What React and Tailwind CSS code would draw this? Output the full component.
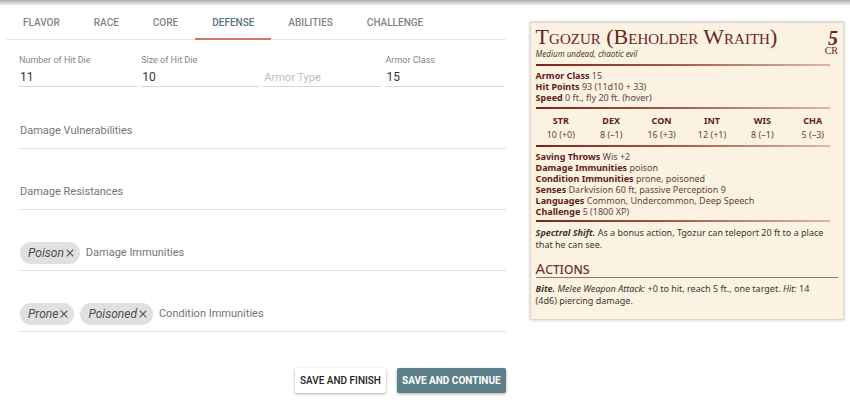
import React from "react";

const tabs = ["FLAVOR", "RACE", "CORE", "DEFENSE", "ABILITIES", "CHALLENGE"];

const abilities = [
  ["STR", "10 (+0)"],
  ["DEX", "8 (–1)"],
  ["CON", "16 (+3)"],
  ["INT", "12 (+1)"],
  ["WIS", "8 (–1)"],
  ["CHA", "5 (–3)"],
];

function Tabs() {
  return (
    <nav className="flex h-[34px] border-b border-[#e8e8e8]">
      {tabs.map((tab) => (
        <button
          key={tab}
          type="button"
          className={
            tab === "DEFENSE"
              ? "-mb-px border-b-2 border-[#cf7a60] px-[17px] text-[10px] font-medium text-[#5c7582]"
              : "-mb-px border-b-2 border-transparent px-[17px] text-[10px] font-medium text-[#858585]"
          }
        >
          {tab}
        </button>
      ))}
    </nav>
  );
}

function Field({ id, label, value }) {
  return (
    <div className="flex h-8 min-w-0 flex-1 flex-col justify-end border-b border-[#d6d6d6]">
      {value && (
        <label htmlFor={id} className="text-[9px] leading-[11px] text-[#858585]">
          {label}
        </label>
      )}
      <input
        id={id}
        type="text"
        aria-label={value ? undefined : label}
        defaultValue={value}
        placeholder={value ? undefined : label}
        className={
          value
            ? "h-5 w-full bg-transparent px-px pt-[2px] text-[12px] text-[#333] outline-none"
            : "h-5 w-full bg-transparent px-px pt-[2px] text-[11px] outline-none placeholder:text-[#bdbdbd]"
        }
      />
    </div>
  );
}

function ChipField({ id, label, chips = [] }) {
  return (
    <div className="flex h-[35px] items-center border-b border-[#e2e2e2] pb-px pl-px">
      {chips.map((chip) => (
        <span
          key={chip}
          className="mr-[6px] flex h-[22px] shrink-0 items-center gap-[2px] rounded-full bg-[#e0e0e0] pr-[6px] pl-2 text-[12px] text-[#4f4f4f] italic"
        >
          {chip}
          <button type="button" aria-label={"Remove " + chip}>
            <svg className="size-2" viewBox="0 0 8 8" fill="none" stroke="#555" strokeWidth="1.2">
              <path d="M0.7 0.7 7.3 7.3M7.3 0.7 0.7 7.3" />
            </svg>
          </button>
        </span>
      ))}
      <input
        id={id}
        type="text"
        aria-label={label}
        placeholder={label}
        className="min-w-0 flex-1 bg-transparent pt-[2px] text-[11px] text-[#555] outline-none placeholder:text-[#757575]"
      />
    </div>
  );
}

function Rule() {
  return <hr className="mr-2 h-[2px] border-0 bg-linear-to-r from-[#7a2418] via-[#a5604f] to-[#dcb9a6]" />;
}

function Stat({ name, children }) {
  return (
    <p>
      <strong className="font-bold text-[#5e2019]">{name}</strong> {children}
    </p>
  );
}

function StatBlock() {
  return (
    <article className="mt-4 h-fit min-w-0 border border-[#e3d6c8] bg-[#fcf2e2] px-[5px] pt-[3px] pb-3 font-['Noto_Sans',sans-serif] text-[9px] leading-[11px] text-[#65423a] shadow-[0_0_3px_rgba(0,0,0,0.25)]">
      <header className="flex justify-between text-[#6b241c]">
        <div>
          <h1 className="font-['Liberation_Serif',serif] text-[22px] leading-[22px] [font-variant-caps:small-caps]">
            Tgozur (Beholder Wraith)
          </h1>
          <p className="text-[8px] leading-[11px] text-[#4d3a32] italic">Medium undead, chaotic evil</p>
        </div>
        <div className="pt-1 text-right font-['Liberation_Serif',serif]">
          <div className="text-[20px] leading-[16px] font-bold italic">5</div>
          <div className="text-[10px] leading-[10px]">CR</div>
        </div>
      </header>

      <div className="pt-[5px]">
        <Rule />
      </div>
      <div className="py-1">
        <Stat name="Armor Class">15</Stat>
        <Stat name="Hit Points">93 (11d10 + 33)</Stat>
        <Stat name="Speed">0 ft., fly 20 ft. (hover)</Stat>
      </div>
      <Rule />
      <table className="my-1 w-full table-fixed text-center">
        <thead>
          <tr>
            {abilities.map(([name]) => (
              <th key={name} scope="col" className="h-[14px] p-0 font-bold text-[#5e2019]">
                {name}
              </th>
            ))}
          </tr>
        </thead>
        <tbody>
          <tr>
            {abilities.map(([name, score]) => (
              <td key={name} className="h-[14px] p-0">
                {score}
              </td>
            ))}
          </tr>
        </tbody>
      </table>
      <Rule />
      <div className="pt-1 pb-[3px]">
        <Stat name="Saving Throws">Wis +2</Stat>
        <Stat name="Damage Immunities">poison</Stat>
        <Stat name="Condition Immunities">prone, poisoned</Stat>
        <Stat name="Senses">Darkvision 60 ft, passive Perception 9</Stat>
        <Stat name="Languages">Common, Undercommon, Deep Speech</Stat>
        <Stat name="Challenge">5 (1800 XP)</Stat>
      </div>
      <Rule />
      <p className="mt-[5px] leading-[12px] text-[#3c3630]">
        <strong className="font-bold italic">Spectral Shift.</strong> As a bonus action, Tgozur can teleport 20 ft to a
        place that he can see.
      </p>
      <h2 className="mt-2 border-b border-[#8c7a70] text-[15px] leading-[18px] text-[#6b3028] [font-variant-caps:small-caps]">
        Actions
      </h2>
      <p className="mt-[5px] leading-[12px] text-[#3c3630]">
        <strong className="font-bold italic">Bite.</strong> <em>Melee Weapon Attack:</em> +0 to hit, reach 5 ft., one
        target. <em>Hit:</em> 14 (4d6)&nbsp;piercing damage.
      </p>
    </article>
  );
}

export default function App() {
  return (
    <div className="min-h-screen bg-white font-[Roboto,sans-serif]">
      <div className="h-[6px] bg-linear-to-b from-[#adadad] to-white" />
      <main className="grid grid-cols-[499fr_314fr] gap-6 px-[6px]">
        <section className="min-w-0">
          <Tabs />
          <form onSubmit={(event) => event.preventDefault()}>
            <div className="mt-[15px] flex gap-1 pr-[2px] pl-[13px]">
              <Field id="hit-die-count" label="Number of Hit Die" value="11" />
              <Field id="hit-die-size" label="Size of Hit Die" value="10" />
              <Field id="armor-type" label="Armor Type" />
              <Field id="armor-class" label="Armor Class" value="15" />
            </div>
            <div className="mt-[27px] flex flex-col gap-[26px] pl-[13px]">
              <ChipField id="vulnerabilities" label="Damage Vulnerabilities" />
              <ChipField id="resistances" label="Damage Resistances" />
              <ChipField id="damage-immunities" label="Damage Immunities" chips={["Poison"]} />
              <ChipField id="condition-immunities" label="Condition Immunities" chips={["Prone", "Poisoned"]} />
            </div>
            <div className="mt-9 flex justify-end gap-[11px]">
              <button
                type="submit"
                className="h-[25px] rounded-[2px] bg-white px-[5px] text-[10px] font-medium text-[#222] shadow-[0_1px_3px_rgba(0,0,0,0.35)]"
              >
                SAVE AND FINISH
              </button>
              <button
                type="submit"
                className="h-[25px] rounded-[2px] bg-[#5c7e89] px-[5px] text-[10px] font-bold text-white shadow-[0_1px_3px_rgba(0,0,0,0.35)]"
              >
                SAVE AND CONTINUE
              </button>
            </div>
          </form>
        </section>
        <StatBlock />
      </main>
    </div>
  );
}
